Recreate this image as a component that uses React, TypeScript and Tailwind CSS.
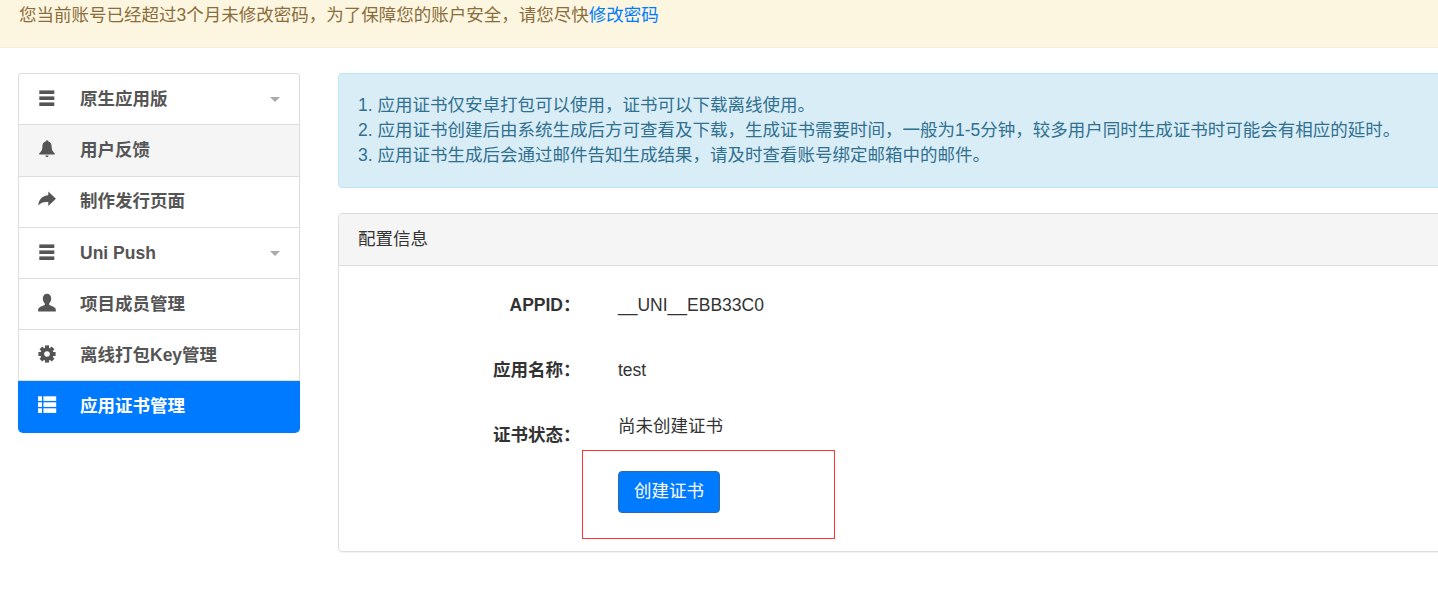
import type { ReactNode } from "react"

const FONT = "[font-family:'Liberation_Sans','Noto_Sans_CJK_SC',sans-serif]"

function Icon({ children }: { children: ReactNode }) {
  return (
    <svg viewBox="0 0 18 18" className="w-[18px] h-[18px] overflow-visible" fill="currentColor">
      {children}
    </svg>
  )
}

const HamburgerIcon = () => (
  <Icon>
    <rect x="1.3" y="1.4" width="15" height="3.6" />
    <rect x="1.3" y="7.4" width="15" height="3.6" />
    <rect x="1.3" y="13.4" width="15" height="3.6" />
  </Icon>
)

const BellIcon = () => (
  <Icon>
    <path d="M9 0.2C7.9 0.2 7.6 1 7.6 1.6C5.3 2.3 4.4 4.2 4.4 6.6C4.4 10 3.4 11.6 1.2 13.4V14.6H16.8V13.4C14.6 11.6 13.6 10 13.6 6.6C13.6 4.2 12.7 2.3 10.4 1.6C10.4 1 10.1 0.2 9 0.2ZM7.4 15.4H10.6C10.4 16.4 9.8 17 9 17C8.2 17 7.6 16.4 7.4 15.4Z" />
  </Icon>
)

const ShareIcon = () => (
  <Icon>
    <path d="M10.3 0.6L17.9 7.8L10.3 15V11C6.5 10.6 3 11 0.2 14.6C0.6 8.6 4.5 4.6 10.3 4.3Z" />
  </Icon>
)

const UserIcon = () => (
  <Icon>
    <path d="M9 -0.3C6.3 -0.3 4.8 1.8 4.8 4.6C4.8 6.6 5.6 8.4 6.8 9.6V11C4.5 12 1 12.8 0.2 15.2V17.5H17.8V15.2C17 12.8 13.5 12 11.2 11V9.6C12.4 8.4 13.2 6.6 13.2 4.6C13.2 1.8 11.7 -0.3 9 -0.3Z" />
  </Icon>
)

const CogIcon = () => (
  <Icon>
    <circle cx="9" cy="9" r="4.7" fill="none" stroke="currentColor" strokeWidth="3.8" />
    {[0, 45, 90, 135, 180, 225, 270, 315].map((deg) => (
      <rect key={deg} x="7" y="0.4" width="4" height="3.2" transform={`rotate(${deg} 9 9)`} />
    ))}
  </Icon>
)

const ThListIcon = () => (
  <Icon>
    {[0.3, 6.3, 12.3].map((y) => (
      <g key={y}>
        <rect x="0" y={y} width="4" height="4.6" />
        <rect x="5.4" y={y} width="12.8" height="4.6" />
      </g>
    ))}
  </Icon>
)

interface MenuItem {
  label: string
  icon: ReactNode
  size: string
  caret?: boolean
  hover?: boolean
  active?: boolean
}

const menu: MenuItem[] = [
  { label: "原生应用版", icon: <HamburgerIcon />, size: "h-[52px]", caret: true },
  { label: "用户反馈", icon: <BellIcon />, size: "h-[52px]", hover: true },
  { label: "制作发行页面", icon: <ShareIcon />, size: "h-[51px] pb-[2px]" },
  { label: "Uni Push", icon: <HamburgerIcon />, size: "h-[51px]", caret: true },
  { label: "项目成员管理", icon: <UserIcon />, size: "h-[51px]" },
  { label: "离线打包Key管理", icon: <CogIcon />, size: "h-[51px]" },
  { label: "应用证书管理", icon: <ThListIcon />, size: "h-[52px] pb-[2px]", active: true },
]

function SideMenu() {
  return (
    <div className="w-[282px] flex-shrink-0 flex flex-col">
      {menu.map((item, i) => (
        <div
          key={item.label}
          className={`${item.size} flex items-center pr-[19px] font-bold text-[17.5px] ${
            item.active
              ? "bg-[#007bff] text-white rounded-b-[5px] pl-[20px]"
              : `border-x border-b border-[#dddddd] text-[#555555] pl-[19px] ${i === 0 ? "border-t rounded-t-[3px]" : ""} ${
                  item.hover ? "bg-[#f5f5f5]" : "bg-white"
                }`
          }`}
        >
          <span className="w-[18px] mr-[24px] -mt-[3px] flex-shrink-0 flex justify-center">{item.icon}</span>
          <span className="flex-1 whitespace-nowrap">{item.label}</span>
          {item.caret && (
            <span className="w-0 h-0 border-x-[5px] border-x-transparent border-t-[5px] border-t-[#aaaaaa]" />
          )}
        </div>
      ))}
    </div>
  )
}

function InfoRow({ label, children }: { label: string; children: ReactNode }) {
  return (
    <div className="flex h-[65px]">
      <div className="w-[241.5px] flex-shrink-0 text-right font-bold text-[#333333] leading-[24px]">{label}：</div>
      <div className="pl-[37.5px] text-[#333333] leading-[24px]">{children}</div>
    </div>
  )
}

export default function App() {
  return (
    <div className={`relative w-[1438px] h-[611px] overflow-hidden bg-white text-[17.5px] ${FONT}`}>
      <div className="h-[48px] bg-[#fcf6e1] border-b border-[#f5efdc] pl-[19px] pt-[1px] text-[#8a6d3b] leading-[28px]">
        您当前账号已经超过3个月未修改密码，为了保障您的账户安全，请您尽快<span className="text-[#007bff]">修改密码</span>
      </div>

      <div className="flex items-start pt-[25px] pl-[18px] gap-[38px]">
        <SideMenu />

        <div className="w-[1200px] flex-shrink-0">
          <div className="h-[115px] bg-[#d9edf7] border border-[#bce8f1] rounded-[4px] pl-[19px] pt-[19px] text-[#31708f] leading-[25px]">
            <div>1. 应用证书仅安卓打包可以使用，证书可以下载离线使用。</div>
            <div>2. 应用证书创建后由系统生成后方可查看及下载，生成证书需要时间，一般为1-5分钟，较多用户同时生成证书时可能会有相应的延时。</div>
            <div>3. 应用证书生成后会通过邮件告知生成结果，请及时查看账号绑定邮箱中的邮件。</div>
          </div>

          <div className="mt-[25px] h-[339px] border border-[#dddddd] rounded-[4px] shadow-[0_1px_1px_rgba(0,0,0,0.05)]">
            <div className="h-[52px] bg-[#f5f5f5] border-b border-[#dddddd] rounded-t-[3px] pl-[19px] flex items-center text-[#333333]">
              配置信息
            </div>
            <div className="pt-[27px]">
              <InfoRow label="APPID">__UNI__EBB33C0</InfoRow>
              <InfoRow label="应用名称">test</InfoRow>
              <div className="flex">
                <div className="w-[241.5px] flex-shrink-0 text-right font-bold text-[#333333] leading-[24px]">证书状态：</div>
                <div className="pl-[37.5px] -mt-[9px]">
                  <div className="text-[#333333] leading-[24px]">尚未创建证书</div>
                  <button className="mt-[33px] w-[102px] h-[42px] pb-[2px] bg-[#007bff] border border-[#2e6da4] rounded-[4px] text-white">
                    创建证书
                  </button>
                </div>
              </div>
            </div>
          </div>
        </div>
      </div>

      {/* red annotation box drawn over the screenshot */}
      <div className="absolute left-[582px] top-[450px] w-[253px] h-[89px] border border-[#ff3333]" />
    </div>
  )
}
